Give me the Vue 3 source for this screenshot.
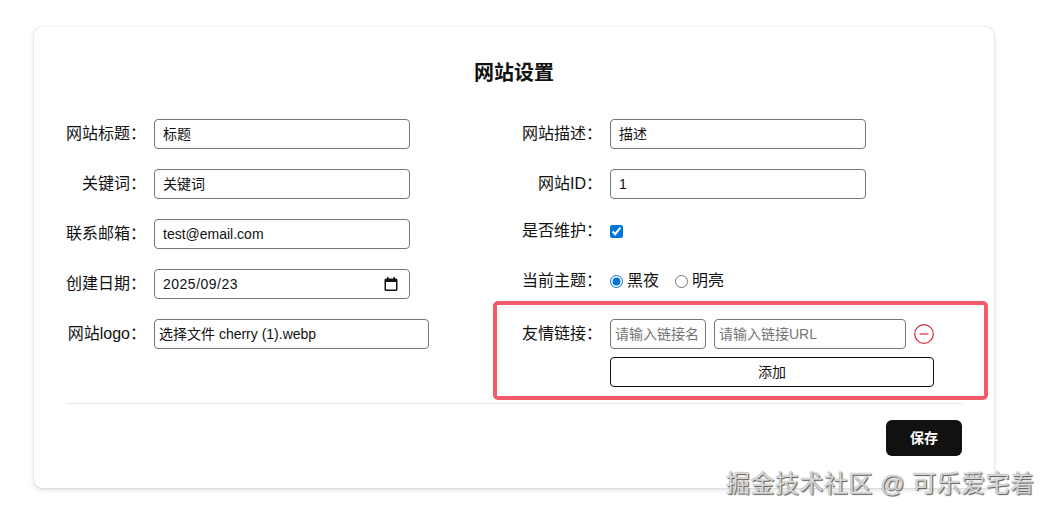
<script setup>
const linkName = ''
const linkUrl = ''
</script>

<template>
  <div class="page">
    <section class="card">
      <h1 class="title">网站设置</h1>
      <form class="grid" @submit.prevent>
        <div class="item">
          <label class="label">网站标题：</label>
          <input class="field cjk" value="标题" />
        </div>
        <div class="item">
          <label class="label">网站描述：</label>
          <input class="field cjk" value="描述" />
        </div>
        <div class="item">
          <label class="label">关键词：</label>
          <input class="field cjk" value="关键词" />
        </div>
        <div class="item">
          <label class="label">网站ID：</label>
          <input class="field" value="1" />
        </div>
        <div class="item">
          <label class="label">联系邮箱：</label>
          <input class="field" value="test@email.com" />
        </div>
        <div class="item tall">
          <label class="label">是否维护：</label>
          <input class="check" type="checkbox" checked />
        </div>
        <div class="item">
          <label class="label">创建日期：</label>
          <div class="field date">
            <span class="date-text">2025/09/23</span>
            <svg class="cal" width="14" height="14" viewBox="0 0 14 14">
              <path fill="#111" d="M3 0h1.500v1.500h5V0H11v1.500h1A1.500 1.500 0 0 1 13.500 3v9.500A1.500 1.500 0 0 1 12 14H2A1.500 1.500 0 0 1 .5 12.500V3A1.500 1.500 0 0 1 2 1.500h1zM2 5v7.500h10V5z" />
            </svg>
          </div>
        </div>
        <div class="item tall">
          <label class="label">当前主题：</label>
          <div class="radios">
            <label class="radio"><input type="radio" name="theme" checked />黑夜</label>
            <label class="radio"><input type="radio" name="theme" />明亮</label>
          </div>
        </div>
        <div class="item">
          <label class="label">网站logo：</label>
          <div class="field file">选择文件 cherry (1).webp</div>
        </div>
        <div class="item links">
          <label class="label">友情链接：</label>
          <div class="link-box">
            <div class="link-row">
              <input class="field name" placeholder="请输入链接名" :value="linkName" />
              <input class="field url" placeholder="请输入链接URL" :value="linkUrl" />
              <svg class="minus" width="20" height="20" viewBox="0 0 20 20" fill="none" stroke="#d5283f" stroke-width="1.200">
                <circle cx="10" cy="10" r="9.300" />
                <path d="M5.500 10h9" />
              </svg>
            </div>
            <button class="add" type="button">添加</button>
          </div>
        </div>
      </form>
      <div class="divider"></div>
      <div class="actions">
        <button class="save" type="button">保存</button>
      </div>
    </section>
    <div class="highlight"></div>
    <div class="watermark">掘金技术社区 @ 可乐爱宅着</div>
  </div>
</template>

<style>
html, body { margin: 0; background: #fff; }
</style>

<style scoped>
.page {
  position: relative;
  width: 1052px;
  height: 515px;
  overflow: hidden;
  padding: 27px 0 0 34px;
  box-sizing: border-box;
  font-family: "Liberation Sans", "Noto Sans CJK SC", sans-serif;
  color: #111;
}
.card {
  width: 960px;
  height: 461px;
  box-sizing: border-box;
  padding: 32px;
  background: #fff;
  border-radius: 8px;
  box-shadow: 0 0 1px rgba(0, 0, 0, .28), 0 2px 5px rgba(0, 0, 0, .14);
}
.title {
  margin: 0 0 32px;
  font-size: 20px;
  line-height: 28px;
  font-weight: 700;
  text-align: center;
}
.grid {
  display: grid;
  grid-template-columns: 440px 440px;
  column-gap: 16px;
  row-gap: 20px;
  align-items: start;
}
.item {
  display: flex;
  align-items: center;
  gap: 8px;
  font-size: 16px;
  line-height: 22px;
}
.tall { line-height: 24px; }
.links { align-items: flex-start; }
.links .label { line-height: 30px; }
.label {
  width: 80px;
  flex: none;
  text-align: right;
  white-space: nowrap;
}
.field {
  width: 256px;
  height: 30px;
  box-sizing: border-box;
  padding: 0 8px;
  border: 1px solid #767676;
  border-radius: 4px;
  background: #fff;
  color: #111;
  font: 14px/28px "Liberation Sans", "Noto Sans CJK SC", sans-serif;
  outline: none;
}
.field::placeholder { color: #757575; opacity: 1; }
.cjk { padding-bottom: 2px; }
.date {
  display: flex;
  align-items: center;
  justify-content: space-between;
  padding-right: 11px;
}
.date-text { letter-spacing: .5px; }
.cal { flex: none; }
.file {
  width: 275px;
  padding: 0 4px;
}
.check {
  width: 13px;
  height: 13px;
  margin: 0;
  accent-color: #0075d9;
}
.radios {
  display: flex;
  gap: 16px;
}
.radio {
  display: flex;
  align-items: center;
  gap: 4px;
}
.radio input {
  width: 13px;
  height: 13px;
  margin: 0;
  accent-color: #0075d9;
}
.link-box {
  display: flex;
  flex-direction: column;
  gap: 8px;
  width: 324px;
}
.link-row {
  display: flex;
  align-items: center;
  gap: 8px;
}
.name, .url { padding: 0 4px; }
.name { width: 96px; }
.url { width: 192px; }
.minus { flex: none; }
.add {
  height: 30px;
  padding: 0 0 2px;
  border: 1px solid #111;
  border-radius: 4px;
  background: #fff;
  color: #111;
  font: 14px "Liberation Sans", "Noto Sans CJK SC", sans-serif;
}
.divider {
  height: 1px;
  margin-top: 16px;
  background: #e8e8e8;
}
.actions {
  display: flex;
  justify-content: flex-end;
  margin-top: 16px;
}
.save {
  width: 76px;
  height: 36px;
  padding: 0 0 2px;
  border: 0;
  border-radius: 6px;
  background: #111;
  color: #fff;
  font: 700 14px "Liberation Sans", "Noto Sans CJK SC", sans-serif;
}
.highlight {
  position: absolute;
  left: 493px;
  top: 301px;
  width: 495px;
  height: 99px;
  box-sizing: border-box;
  border: 4px solid #f45b69;
  border-radius: 5px;
  pointer-events: none;
}
.watermark {
  position: absolute;
  left: 726px;
  top: 467px;
  font-size: 24px;
  line-height: 34px;
  letter-spacing: .5px;
  white-space: nowrap;
  color: rgba(255, 255, 255, .75);
  text-shadow: 1px 1px 1px #555, 0 0 1px #666;
}
</style>
